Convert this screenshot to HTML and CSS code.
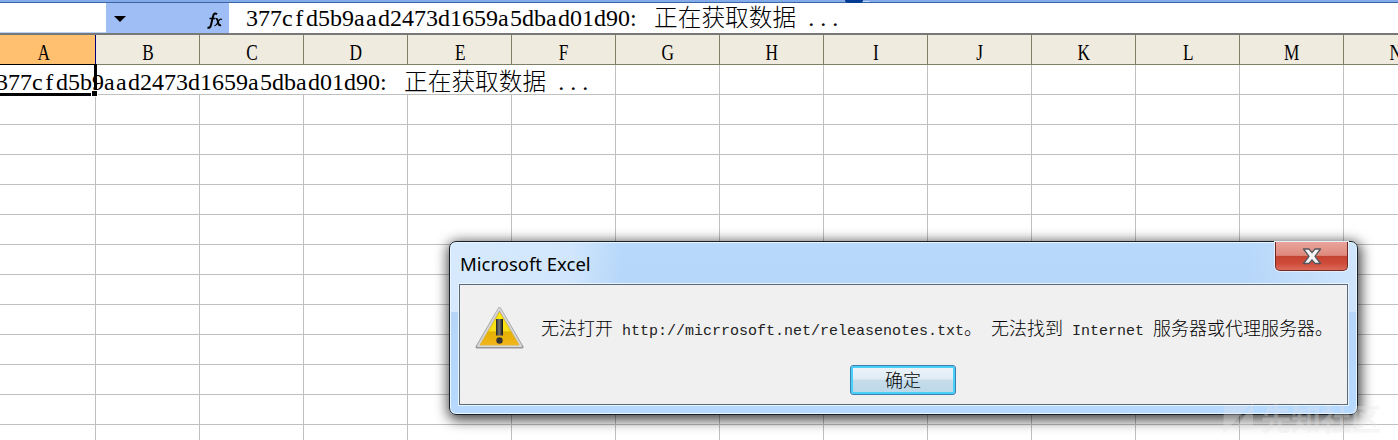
FILE: index.html
```html
<!DOCTYPE html>
<html lang="zh-CN">
<head>
<meta charset="utf-8">
<title>Microsoft Excel</title>
<link rel="stylesheet" href="styles.css">
</head>
<body>
<div class="app">
  <div class="strip"><span class="tab"></span></div>
  <div class="formula-bar">
    <div class="name-box"></div>
    <div class="fx-area">
      <svg class="arrow" width="12" height="6" viewBox="0 0 12 6"><path d="M0 0H12L6 6Z"/></svg>
      <svg class="fx" width="16" height="18" viewBox="0 0 16 18" fill="none" stroke="#000"><path stroke-width="2" d="M10 2.200Q7 0 6 4.500L4 13Q3.300 16.500.500 15.500"/><path stroke-width="1.300" d="M2.500 6.500H8.500M7.500 13.500Q9 14 10.500 11L12 8.500Q13 6.500 15 7.500"/><path stroke-width="2" d="M9 7Q10.500 6.500 11 10Q11.500 14 14 13"/></svg>
    </div>
    <div class="formula mono">377<i>cf</i>d5b9<i>aa</i>d2473d1659<i>a</i>5db<i>a</i>d01d90<b>:</b> <span class="cjk">正在获取数据</span> <b>...</b></div>
  </div>
  <div class="headers">
    <div class="th first"><span>A</span></div><div class="th"><span>B</span></div><div class="th"><span>C</span></div><div class="th"><span>D</span></div><div class="th"><span>E</span></div><div class="th"><span>F</span></div><div class="th"><span>G</span></div><div class="th"><span>H</span></div><div class="th"><span>I</span></div><div class="th"><span>J</span></div><div class="th"><span>K</span></div><div class="th"><span>L</span></div><div class="th"><span>M</span></div><div class="th"><span>N</span></div>
  </div>
  <div class="sheet">
    <div class="row-one"><div class="mono">377<i>cf</i>d5b9<i>aa</i>d2473d1659<i>a</i>5db<i>a</i>d01d90<b>:</b> <span class="cjk">正在获取数据</span> <b>...</b></div></div>
    <div class="selection"><span class="handle"></span></div>
  </div>
</div>
<div class="dialog">
  <div class="title-bar">
    <span class="title">Microsoft Excel</span>
    <div class="close"><svg width="20" height="17" viewBox="0 0 20 17"><path d="M1.500 1H7L10 4.700L13 1H18.500L13 8.300L18.500 15.500H13L10 11.800L7 15.500H1.500L7 8.300Z" fill="#f4f4f4" stroke="#53565f" stroke-width="1.300" stroke-linejoin="round"/></svg></div>
  </div>
  <div class="client">
    <svg class="warning" width="50" height="44" viewBox="0 0 50 44">
      <defs>
        <linearGradient id="gold" x1="0" y1="0" x2="0" y2="1"><stop offset="0" stop-color="#fff200"/><stop offset=".58" stop-color="#f6dc1b"/><stop offset=".6" stop-color="#e3b000"/><stop offset="1" stop-color="#f3b51c"/></linearGradient>
        <linearGradient id="ink" x1="0" y1="0" x2="1" y2="0"><stop offset="0" stop-color="#222"/><stop offset=".45" stop-color="#777"/><stop offset="1" stop-color="#111"/></linearGradient>
      </defs>
      <path d="M24.500 2.500L47 41H2Z" fill="#c9c9c9" stroke="#999" stroke-width="3" stroke-linejoin="round"/>
      <path d="M24.500 2.500L46 40H3Z" fill="none" stroke="#d7d7d7" stroke-width="2" stroke-linejoin="round"/>
      <path d="M24.500 6L44 39H5Z" fill="url(#gold)" stroke="#e2b62b" stroke-width=".8"/>
      <path d="M21 13H28V29.500H21Z" fill="url(#ink)"/><circle cx="24.500" cy="34.500" r="3.200" fill="#343434"/>
    </svg>
    <div class="message"><span>无法打开</span><em> http://micrrosoft.net/releasenotes.txt</em><span>。</span><em> </em><span>无法找到</span><em> Internet </em><span>服务器或代理服务器。</span></div>
    <div class="ok">确定</div>
  </div>
</div>
<div class="watermark">
  <svg width="34" height="34" viewBox="0 0 34 34"><path d="M2 5H27L1 33ZM31 2V29H13Z"/></svg>
  <span>先知社区</span>
</div>
</body>
</html>
```
FILE: styles.css
```css
* { box-sizing: border-box; }
body { margin: 0; width: 1398px; height: 440px; overflow: hidden; position: relative; background: #fff; color: #000; }
svg { display: block; }
.strip { height: 3px; background: #83abe9; border-bottom: 1px solid #3b65a6; }
.tab { display: block; width: 18px; height: 3px; margin-left: 845px; background: #053c93; border-radius: 0 0 5px 5px; box-shadow: 8px 0 0 -1px #b7d5fb; }
.formula-bar { height: 32px; display: flex; border-bottom: 2px solid #787878; }
.name-box { width: 106px; height: 30px; border-bottom: 1px solid #b9d0f7; }
.fx-area { width: 123px; height: 30px; background: #9ebef5; display: flex; justify-content: space-between; padding: 13px 6px 0 8px; }
.fx { margin-top: -4px; }
.mono { font: 24px/30px "Liberation Serif", serif; white-space: pre; word-spacing: 6px; }
.mono i { font-style: normal; letter-spacing: 1.35px; }
.mono i:first-of-type { letter-spacing: 2.67px; }
.mono b { font-weight: normal; letter-spacing: 6px; }
.mono b:first-of-type { letter-spacing: 5.33px; }
.cjk { font-family: "Noto Sans CJK SC", sans-serif; font-weight: 300; font-size: 23.7px; }
.formula { padding-left: 17px; margin-top: -2px; height: 30px; }
.headers { height: 30px; display: flex; overflow: hidden; background: #efebde; border-bottom: 1px solid #7f7f68; }
.th { flex: 0 0 104px; height: 30px; border-right: 1px solid #7f7f68; text-align: center; padding-left: 1px; font: 24px/34px "Liberation Serif", serif; }
.th.first { margin-left: -8px; background: #ffc070; border-color: #00007e; border-bottom: 1px solid #00007e; }
.th span { display: inline-block; transform: scaleX(.72); }
.sheet { height: 375px; position: relative; background: repeating-linear-gradient(to bottom, transparent 0 29px, #c0c0c0 29px 30px), repeating-linear-gradient(to right, transparent 0 103px, #c0c0c0 103px 104px) -8px 0 / 1456px 100%; }
.row-one { width: 615px; height: 29px; background: #fff; }
.row-one .mono { margin-left: -4px; }
.selection { position: absolute; left: -4px; top: -1px; width: 101px; height: 32px; border: 3px solid #000; border-top-width: 1px; }
.handle { position: absolute; right: -4px; bottom: -4px; width: 7px; height: 7px; background: #000; border: 1px solid #fff; }
.dialog { position: absolute; left: 449px; top: 241px; width: 909px; height: 174px; padding: 0 9px 9px; border: 1px solid #17202b; border-radius: 7px; background: linear-gradient(90deg, rgba(235,245,255,.6), rgba(235,245,255,.5) 120px, transparent 170px 800px, rgba(235,245,255,.45)) 0 0 / 100% 70px no-repeat, linear-gradient(#b8d9fb, #b6d5f8 40%, #b6d9ff); box-shadow: inset 0 0 0 1px #eaf5ff, 1px 3px 13px 2px rgba(0,0,0,.75); }
.title-bar { height: 42px; display: flex; justify-content: space-between; }
.title { font: 18.5px/43px "Noto Sans", sans-serif; padding-left: 1px; }
.close { width: 73px; height: 29px; display: flex; justify-content: center; padding-top: 6px; border: 1px solid #702a25; border-top: 0; border-radius: 0 0 5px 5px; background: linear-gradient(#e9a39a, #df897d 48%, #c44331 50%, #cf4a38 75%, #dc6a59); box-shadow: 0 0 0 1px #e5effa; }
.client { width: 889px; height: 121px; background: #f0f0f0; border: 1px solid #5a6a7b; box-shadow: 0 0 0 1px #e8f4ff; display: grid; grid-template: 80px 30px / 81px 1fr; }
.warning { margin: 21px 0 0 15px; }
.message { white-space: pre; padding-top: 27px; font: 300 18px/30px "Noto Sans CJK SC", sans-serif; }
.message em { font: 15px/30px "Liberation Mono", monospace; color: #222; }
.ok { grid-column: 1 / 3; justify-self: center; margin-right: 1px; width: 106px; height: 30px; border: 1px solid #3c7fb1; border-radius: 3px; box-shadow: inset 0 0 0 2px #48d0f8; background: linear-gradient(#eef5fb, #dfebf4 47%, #c6dceb 50%, #bcd8e8); text-align: center; font: 300 18px/27px "Noto Sans CJK SC", sans-serif; }
.watermark { position: absolute; left: 1222px; top: 401px; display: flex; gap: 5px; opacity: .3; color: #e6e6e6; font: bold 30px/32px "Noto Sans CJK SC", sans-serif; }
.watermark path { fill: #e6e6e6; }
```
